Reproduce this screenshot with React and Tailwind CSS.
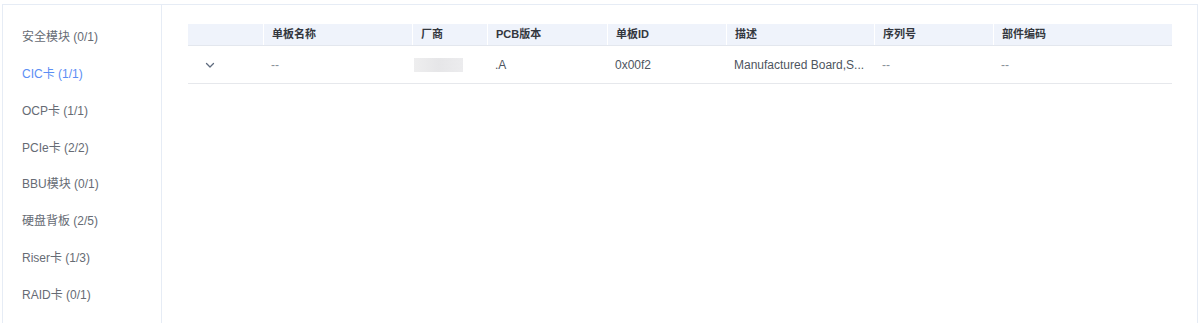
import React from "react";

const sideItems = [
    "安全模块 (0/1)",
    "CIC卡 (1/1)",
    "OCP卡 (1/1)",
    "PCIe卡 (2/2)",
    "BBU模块 (0/1)",
    "硬盘背板 (2/5)",
    "Riser卡 (1/3)",
    "RAID卡 (0/1)",
];

const cols = [
    { key: "expand", title: "", w: "w-[75px]" },
    { key: "name", title: "单板名称", w: "w-[149px]" },
    { key: "vendor", title: "厂商", w: "w-[75px]" },
    { key: "pcb", title: "PCB版本", w: "w-[120px]" },
    { key: "id", title: "单板ID", w: "w-[119px]" },
    { key: "desc", title: "描述", w: "w-[148px]" },
    { key: "sn", title: "序列号", w: "w-[119px]" },
    { key: "part", title: "部件编码", w: "flex-1" },
];

const Chevron = () => (
    <svg width="12" height="12" viewBox="0 0 12 12" fill="none">
        <path d="M2.5 4.5L6 8L9.5 4.5" stroke="#5f6b7e" strokeWidth="1.3" strokeLinecap="round" strokeLinejoin="round" />
    </svg>
);

const App = () => {
    return (
        <div
            className="w-[1202px] h-[323px] bg-white pt-1 pl-[2px] pr-[4px] overflow-hidden"
            style={{ fontFamily: '"Liberation Sans", "Noto Sans CJK SC", sans-serif' }}
        >
            <div className="flex h-[330px] border border-[#e6ecf5] border-b-0">
                {/* sidebar */}
                <aside className="w-[159px] shrink-0 border-r border-[#e6ecf5] pl-[19px] pt-[22px] flex flex-col">
                    {sideItems.map((t, i) => (
                        <div
                            key={t}
                            className={
                                "h-[36.85px] shrink-0 text-[12px] leading-[20px] " +
                                (i === 1 ? "text-[#5b8ef4]" : "text-[#666b74]")
                            }
                        >
                            {t}
                        </div>
                    ))}
                </aside>

                {/* table */}
                <main className="flex-1 pl-[26px] pr-[25px] pt-[19px]">
                    <div className="flex h-[22px] bg-[#eff3fb] border-b border-[#e3e7ee]">
                        {cols.map((c, i) => (
                            <div
                                key={c.key}
                                className={
                                    c.w +
                                    " shrink-0 flex items-center px-2 text-[11px] font-bold text-[#33373e] " +
                                    (i > 0 ? "border-l border-white" : "")
                                }
                            >
                                {c.title}
                            </div>
                        ))}
                    </div>
                    <div className="flex h-[38px] border-b border-[#e6e8ec] text-[12px] text-[#4e5560]">
                        <div className="w-[75px] shrink-0 flex items-center pl-[16px]">
                            <Chevron />
                        </div>
                        <div className="w-[149px] shrink-0 flex items-center px-2 text-[#8a9099]">--</div>
                        <div className="w-[75px] shrink-0 flex items-center px-[2px]">
                            <div className="w-[49px] h-[14px] bg-gradient-to-r from-[#eeeeef] via-[#e6e6e8] to-[#ececee]" />
                        </div>
                        <div className="w-[120px] shrink-0 flex items-center px-2">.A</div>
                        <div className="w-[119px] shrink-0 flex items-center px-2">0x00f2</div>
                        <div className="w-[148px] shrink-0 flex items-center px-2 whitespace-nowrap">
                            Manufactured Board,S...
                        </div>
                        <div className="w-[119px] shrink-0 flex items-center px-2 text-[#8a9099]">--</div>
                        <div className="flex-1 flex items-center px-2 text-[#8a9099]">--</div>
                    </div>
                </main>
            </div>
        </div>
    );
};

export default App;
